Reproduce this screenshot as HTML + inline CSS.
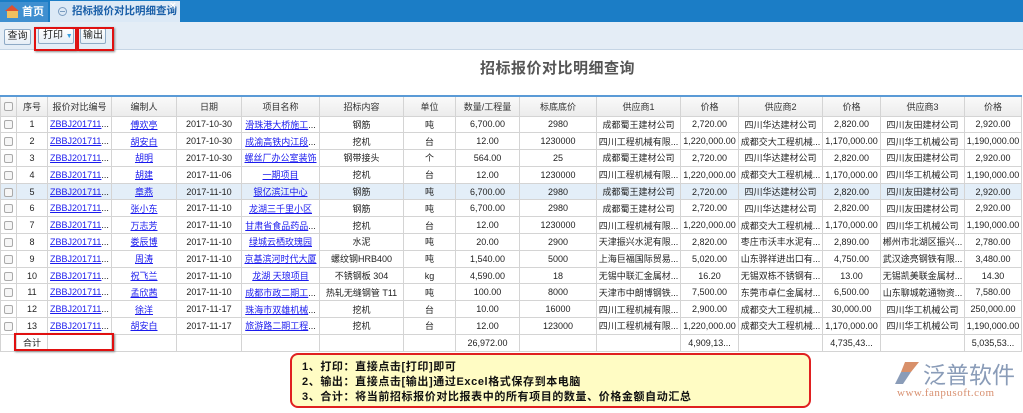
<!DOCTYPE html>
<html><head><meta charset="utf-8"><style>
*{margin:0;padding:0;box-sizing:border-box}
body{width:1023px;height:413px;overflow:hidden;background:#fff;font-family:"Liberation Sans","Noto Sans CJK SC",sans-serif;font-size:11px;color:#222;position:relative}
.tabbar{position:absolute;left:0;top:0;width:1023px;height:22px;background:#1b7dc6}
.home{position:absolute;left:0;top:2px;width:48px;height:20px;background:#3f8fd0;color:#fff;font-weight:bold;font-size:11px;line-height:20px;padding-left:22px}
.home i{position:absolute;left:7px;top:8px;width:11px;height:8px;background:#f0c060}
.home i:before{content:"";position:absolute;left:-2px;top:-5px;border-left:7.5px solid transparent;border-right:7.5px solid transparent;border-bottom:6px solid #e05030}
.tab{position:absolute;left:50px;top:1px;width:130px;height:21px;background:#dce9f6;color:#1a5fa8;font-weight:bold;font-size:10.5px;line-height:21px;padding-left:22px;white-space:nowrap}
.tab .c{position:absolute;left:8px;top:6px;width:9px;height:9px;border:1px solid #7a9cc0;border-radius:50%}
.tab .c:after{content:"";position:absolute;left:1px;top:3px;width:5px;height:1px;background:#7a9cc0}
.tab .x{position:absolute;right:4px;top:-5px;color:#fff;font-size:11px}
.toolbar{position:absolute;left:0;top:22px;width:1023px;height:28px;background:#e4edf6;border-bottom:1px solid #c5d5e5}
.btn{position:absolute;top:7px;height:16px;border:1px solid #8eaac6;border-radius:2px;background:linear-gradient(#fff,#e6eef6);font-size:10px;line-height:14px;text-align:center;white-space:nowrap}
.red{position:absolute;border:2px solid #e01010;box-shadow:1px 1px 2px #888}
h1{position:absolute;left:480px;top:57px;font-size:15px;color:#555;font-weight:bold;letter-spacing:0.5px}
table{position:absolute;left:0;top:95px;width:1021px;border-collapse:collapse;table-layout:fixed;border-top:2px solid #5a9ad6}
td,th{border:1px solid #d4d4d4;height:16.8px;text-align:center;white-space:nowrap;overflow:hidden;font-weight:normal;font-size:9px;padding:0 1px}
th{height:20px;background:linear-gradient(#fafafa,#ececec);color:#333}
a{color:#1a1aee;text-decoration:underline}
tr.s td{background:#e3eef8}
.cb{display:inline-block;width:9px;height:9px;border:1px solid #aaa;border-radius:2px;background:#f6f6f6;vertical-align:middle}
.note{position:absolute;left:290px;top:353px;width:521px;height:55px;background:#fffcc4;border:2px solid #e02020;border-radius:8px;padding:5px 0 0 10px;font-size:11px;font-weight:bold;line-height:15px;color:#111;letter-spacing:0.6px}
.logo{position:absolute;left:893px;top:360px}
.logo .t{position:absolute;left:30px;top:-4px;font-size:23px;color:#8a9cb8;white-space:nowrap;letter-spacing:0px}
.logo .u{position:absolute;left:4px;top:27px;font-family:"Liberation Serif",serif;font-size:11px;color:#d89070;white-space:nowrap;letter-spacing:0.5px}
</style></head><body>
<div class="tabbar"><div class="home"><i></i>首页</div><div class="tab"><span class="c"></span>招标报价对比明细查询<span class="x">×</span></div></div>
<div class="toolbar">
<div class="btn" style="left:4px;width:27px;top:7px">查询</div>
<div class="btn" style="left:38px;width:36px;top:6px;text-align:left;padding-left:4px">打印 <span style="color:#3aa0e0;font-size:7px">▼</span></div>
<div class="btn" style="left:80px;width:26px;top:6px">输出</div>
</div>
<div class="red" style="left:34px;top:27px;width:43px;height:24px"></div>
<div class="red" style="left:77px;top:27px;width:37px;height:24px"></div>
<h1>招标报价对比明细查询</h1>
<table>
<colgroup><col style="width:16px"><col style="width:31px"><col style="width:64px"><col style="width:65px"><col style="width:65px"><col style="width:78px"><col style="width:84px"><col style="width:52px"><col style="width:64px"><col style="width:77px"><col style="width:84px"><col style="width:58px"><col style="width:84px"><col style="width:58px"><col style="width:84px"><col style="width:57px"></colgroup>
<tr><th><span class="cb"></span></th><th>序号</th><th>报价对比编号</th><th>编制人</th><th>日期</th><th>项目名称</th><th>招标内容</th><th>单位</th><th>数量/工程量</th><th>标底底价</th><th>供应商1</th><th>价格</th><th>供应商2</th><th>价格</th><th>供应商3</th><th>价格</th></tr>
<tr><td><span class="cb"></span></td><td>1</td><td><a>ZBBJ201711</a>...</td><td><a>傅欢亭</a></td><td>2017-10-30</td><td><a>滑珠港大桥施工</a>...</td><td>钢筋</td><td>吨</td><td>6,700.00</td><td>2980</td><td>成都蜀王建材公司</td><td>2,720.00</td><td>四川华达建材公司</td><td>2,820.00</td><td>四川友田建材公司</td><td>2,920.00</td></tr>
<tr><td><span class="cb"></span></td><td>2</td><td><a>ZBBJ201711</a>...</td><td><a>胡安白</a></td><td>2017-10-30</td><td><a>成渝高铁内江段</a>...</td><td>挖机</td><td>台</td><td>12.00</td><td>1230000</td><td>四川工程机械有限...</td><td>1,220,000.00</td><td>成都交大工程机械...</td><td>1,170,000.00</td><td>四川华工机械公司</td><td>1,190,000.00</td></tr>
<tr><td><span class="cb"></span></td><td>3</td><td><a>ZBBJ201711</a>...</td><td><a>胡明</a></td><td>2017-10-30</td><td><a>螺丝厂办公室装饰</a></td><td>钢带接头</td><td>个</td><td>564.00</td><td>25</td><td>成都蜀王建材公司</td><td>2,720.00</td><td>四川华达建材公司</td><td>2,820.00</td><td>四川友田建材公司</td><td>2,920.00</td></tr>
<tr><td><span class="cb"></span></td><td>4</td><td><a>ZBBJ201711</a>...</td><td><a>胡建</a></td><td>2017-11-06</td><td><a>一期项目</a></td><td>挖机</td><td>台</td><td>12.00</td><td>1230000</td><td>四川工程机械有限...</td><td>1,220,000.00</td><td>成都交大工程机械...</td><td>1,170,000.00</td><td>四川华工机械公司</td><td>1,190,000.00</td></tr>
<tr class="s"><td><span class="cb"></span></td><td>5</td><td><a>ZBBJ201711</a>...</td><td><a>章燕</a></td><td>2017-11-10</td><td><a>银亿滨江中心</a></td><td>钢筋</td><td>吨</td><td>6,700.00</td><td>2980</td><td>成都蜀王建材公司</td><td>2,720.00</td><td>四川华达建材公司</td><td>2,820.00</td><td>四川友田建材公司</td><td>2,920.00</td></tr>
<tr><td><span class="cb"></span></td><td>6</td><td><a>ZBBJ201711</a>...</td><td><a>张小东</a></td><td>2017-11-10</td><td><a>龙湖三千里小区</a></td><td>钢筋</td><td>吨</td><td>6,700.00</td><td>2980</td><td>成都蜀王建材公司</td><td>2,720.00</td><td>四川华达建材公司</td><td>2,820.00</td><td>四川友田建材公司</td><td>2,920.00</td></tr>
<tr><td><span class="cb"></span></td><td>7</td><td><a>ZBBJ201711</a>...</td><td><a>万志芳</a></td><td>2017-11-10</td><td><a>甘肃省食品药品</a>...</td><td>挖机</td><td>台</td><td>12.00</td><td>1230000</td><td>四川工程机械有限...</td><td>1,220,000.00</td><td>成都交大工程机械...</td><td>1,170,000.00</td><td>四川华工机械公司</td><td>1,190,000.00</td></tr>
<tr><td><span class="cb"></span></td><td>8</td><td><a>ZBBJ201711</a>...</td><td><a>娄辰博</a></td><td>2017-11-10</td><td><a>绿城云栖玫瑰园</a></td><td>水泥</td><td>吨</td><td>20.00</td><td>2900</td><td>天津振兴水泥有限...</td><td>2,820.00</td><td>枣庄市沃丰水泥有...</td><td>2,890.00</td><td>郴州市北湖区振兴...</td><td>2,780.00</td></tr>
<tr><td><span class="cb"></span></td><td>9</td><td><a>ZBBJ201711</a>...</td><td><a>周涛</a></td><td>2017-11-10</td><td><a>京基滨河时代大厦</a></td><td>螺纹钢HRB400</td><td>吨</td><td>1,540.00</td><td>5000</td><td>上海巨福国际贸易...</td><td>5,020.00</td><td>山东骅祥进出口有...</td><td>4,750.00</td><td>武汉途亮钢铁有限...</td><td>3,480.00</td></tr>
<tr><td><span class="cb"></span></td><td>10</td><td><a>ZBBJ201711</a>...</td><td><a>祝飞兰</a></td><td>2017-11-10</td><td><a>龙湖 天琅项目</a></td><td>不锈钢板 304</td><td>kg</td><td>4,590.00</td><td>18</td><td>无锡中联汇金属材...</td><td>16.20</td><td>无锡双栋不锈钢有...</td><td>13.00</td><td>无锡凯美联金属材...</td><td>14.30</td></tr>
<tr><td><span class="cb"></span></td><td>11</td><td><a>ZBBJ201711</a>...</td><td><a>孟欣茜</a></td><td>2017-11-10</td><td><a>成都市政二期工</a>...</td><td>热轧无缝钢管 T11</td><td>吨</td><td>100.00</td><td>8000</td><td>天津市中朗博钢铁...</td><td>7,500.00</td><td>东莞市卓仁金属材...</td><td>6,500.00</td><td>山东聊城乾通物资...</td><td>7,580.00</td></tr>
<tr><td><span class="cb"></span></td><td>12</td><td><a>ZBBJ201711</a>...</td><td><a>徐洋</a></td><td>2017-11-17</td><td><a>珠海市双雄机械</a>...</td><td>挖机</td><td>台</td><td>10.00</td><td>16000</td><td>四川工程机械有限...</td><td>2,900.00</td><td>成都交大工程机械...</td><td>30,000.00</td><td>四川华工机械公司</td><td>250,000.00</td></tr>
<tr><td><span class="cb"></span></td><td>13</td><td><a>ZBBJ201711</a>...</td><td><a>胡安白</a></td><td>2017-11-17</td><td><a>旅游路二期工程</a>...</td><td>挖机</td><td>台</td><td>12.00</td><td>123000</td><td>四川工程机械有限...</td><td>1,220,000.00</td><td>成都交大工程机械...</td><td>1,170,000.00</td><td>四川华工机械公司</td><td>1,190,000.00</td></tr>
<tr><td></td><td>合计</td><td></td><td></td><td></td><td></td><td></td><td></td><td>26,972.00</td><td></td><td></td><td>4,909,13...</td><td></td><td>4,735,43...</td><td></td><td>5,035,53...</td></tr>
</table>
<div class="red" style="left:14px;top:333px;width:100px;height:18px"></div>
<div class="note">1、打印：直接点击[打印]即可<br>2、输出：直接点击[输出]通过Excel格式保存到本电脑<br>3、合计：将当前招标报价对比报表中的所有项目的数量、价格金额自动汇总</div>
<div class="logo">
<svg width="30" height="26" style="position:absolute;left:0;top:0"><path d="M12 2 L26 2 L18 12 L8 12 Z" fill="#d8906a"/><path d="M8 12 L18 12 L10 24 L2 24 Z" fill="#8a9cb8"/></svg>
<div class="t">泛普软件</div><div class="u">www.fanpusoft.com</div></div>
</body></html>
